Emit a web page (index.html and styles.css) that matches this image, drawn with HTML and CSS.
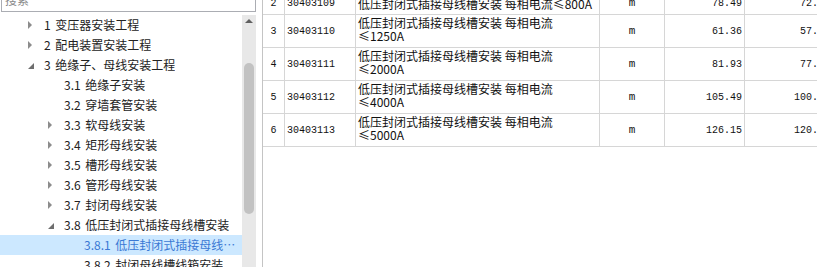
FILE: index.html
```html
<!DOCTYPE html>
<html lang="zh-CN">
<head>
<meta charset="utf-8">
<title>定额库</title>
<link rel="stylesheet" href="styles.css">
</head>
<body>
<div class="app">
  <aside class="left">
    <div class="search"><span class="placeholder">搜索</span></div>
    <div class="tree-area">
      <ul class="tree">
        <li class="node l0"><span class="arrow closed"></span><span class="label">1 变压器安装工程</span></li>
        <li class="node l0"><span class="arrow closed"></span><span class="label">2 配电装置安装工程</span></li>
        <li class="node l0"><span class="arrow open"></span><span class="label">3 绝缘子、母线安装工程</span></li>
        <li class="node l1"><span class="arrow"></span><span class="label">3.1 绝缘子安装</span></li>
        <li class="node l1"><span class="arrow"></span><span class="label">3.2 穿墙套管安装</span></li>
        <li class="node l1"><span class="arrow closed"></span><span class="label">3.3 软母线安装</span></li>
        <li class="node l1"><span class="arrow closed"></span><span class="label">3.4 矩形母线安装</span></li>
        <li class="node l1"><span class="arrow closed"></span><span class="label">3.5 槽形母线安装</span></li>
        <li class="node l1"><span class="arrow closed"></span><span class="label">3.6 管形母线安装</span></li>
        <li class="node l1"><span class="arrow closed"></span><span class="label">3.7 封闭母线安装</span></li>
        <li class="node l1"><span class="arrow open"></span><span class="label">3.8 低压封闭式插接母线槽安装</span></li>
        <li class="node l2 selected"><span class="arrow"></span><span class="label">3.8.1 低压封闭式插接母线槽安装</span></li>
        <li class="node l2"><span class="arrow"></span><span class="label">3.8.2 封闭母线槽线箱安装</span></li>
      </ul>
      <div class="scrollbar">
        <span class="up"></span>
        <span class="thumb"></span>
      </div>
    </div>
  </aside>
  <main class="right">
    <div class="grid">
      <div class="row single">
        <div class="c no">2</div>
        <div class="c code">30403109</div>
        <div class="c name">低压封闭式插接母线槽安装 每相电流≤800A</div>
        <div class="c unit">m</div>
        <div class="c num">78.49</div>
        <div class="c num">72.85</div>
      </div>
      <div class="row">
        <div class="c no">3</div>
        <div class="c code">30403110</div>
        <div class="c name top"><span class="ln">低压封闭式插接母线槽安装 每相电流</span><span class="ln">≤1250A</span></div>
        <div class="c unit">m</div>
        <div class="c num">61.36</div>
        <div class="c num">57.12</div>
      </div>
      <div class="row">
        <div class="c no">4</div>
        <div class="c code">30403111</div>
        <div class="c name top"><span class="ln">低压封闭式插接母线槽安装 每相电流</span><span class="ln">≤2000A</span></div>
        <div class="c unit">m</div>
        <div class="c num">81.93</div>
        <div class="c num">77.43</div>
      </div>
      <div class="row">
        <div class="c no">5</div>
        <div class="c code">30403112</div>
        <div class="c name top"><span class="ln">低压封闭式插接母线槽安装 每相电流</span><span class="ln">≤4000A</span></div>
        <div class="c unit">m</div>
        <div class="c num">105.49</div>
        <div class="c num">100.24</div>
      </div>
      <div class="row">
        <div class="c no">6</div>
        <div class="c code">30403113</div>
        <div class="c name top"><span class="ln">低压封闭式插接母线槽安装 每相电流</span><span class="ln">≤5000A</span></div>
        <div class="c unit">m</div>
        <div class="c num">126.15</div>
        <div class="c num">120.61</div>
      </div>
    </div>
  </main>
</div>
</body>
</html>
```
FILE: styles.css
```css
* { box-sizing: border-box; }
html, body {
  margin: 0;
  padding: 0;
  background: #fff;
  width: 817px;
  height: 267px;
  overflow: hidden;
}
body {
  font-family: "Noto Sans CJK SC", "Noto Sans", sans-serif;
  font-size: 12px;
  color: #222;
}
.app {
  display: flex;
  width: 817px;
  height: 267px;
  overflow: hidden;
}

/* left panel */
.left {
  width: 256px;
  flex: none;
  display: flex;
  flex-direction: column;
}
.search {
  margin-top: -12px;
  margin-left: 1px;
  height: 24px;
  border: 1px solid #abadb3;
  display: flex;
  align-items: center;
  padding-left: 3px;
  flex: none;
}
.placeholder {
  color: #8a8a8a;
  line-height: 14px;
}
.tree-area {
  flex: 1;
  display: flex;
  margin-top: 3px;
  min-height: 0;
}
.tree {
  list-style: none;
  margin: 0;
  padding: 0;
  width: 242px;
  flex: none;
}
.node {
  height: 20px;
  display: flex;
  align-items: center;
  padding-right: 4px;
  white-space: nowrap;
  word-spacing: 2px;
}
.node.l0 { padding-left: 28px; }
.node.l1 { padding-left: 48px; }
.node.l2 { padding-left: 68px; }
.node.selected {
  background: #cce8ff;
  color: #3a78d4;
}
.arrow {
  width: 16px;
  height: 20px;
  flex: none;
  position: relative;
}
.arrow.closed::before {
  content: "";
  position: absolute;
  left: 0;
  top: 6px;
  border-left: 4px solid #8c8c8c;
  border-top: 4px solid transparent;
  border-bottom: 4px solid transparent;
}
.arrow.open::before {
  content: "";
  position: absolute;
  left: 0;
  top: 8px;
  border-right: 6px solid #6e6e6e;
  border-top: 6px solid transparent;
}
.label {
  overflow: hidden;
  text-overflow: ellipsis;
  line-height: 16px;
  min-width: 0;
}
.scrollbar {
  width: 14px;
  flex: none;
  background: #e8e8e8;
  display: flex;
  flex-direction: column;
  align-items: center;
}
.up {
  margin-top: 4px;
  width: 0;
  height: 0;
  border-left: 4px solid transparent;
  border-right: 4px solid transparent;
  border-bottom: 4px solid #606060;
}
.thumb {
  margin-top: 40px;
  width: 10px;
  height: 151px;
  border-radius: 5px;
  background: #c2c2c2;
}

/* right panel */
.right {
  flex: 1;
  margin-left: 6px;
  border-left: 1px solid #c4c4c4;
  overflow: hidden;
  min-width: 0;
}
.grid {
  margin-top: -8px;
  width: 570px;
}
.row {
  display: grid;
  grid-template-columns: 22px 71px 244px 65px 80px 88px;
  height: 33px;
  border-bottom: 1px solid #d6d6d6;
}
.row.single { height: 23px; }
.c {
  border-right: 1px solid #d6d6d6;
  display: flex;
  align-items: center;
  white-space: nowrap;
  overflow: hidden;
  color: #111;
}
.no {
  justify-content: center;
  font-family: "Liberation Mono", monospace;
  font-size: 10px;
}
.code {
  padding-left: 2px;
  font-family: "Liberation Mono", monospace;
  font-size: 10px;
}
.name {
  padding-left: 2px;
  line-height: 13px;
}
.name.top {
  flex-direction: column;
  align-items: flex-start;
  justify-content: flex-start;
  padding-top: 1px;
}
.ln {
  display: block;
  height: 13px;
  line-height: 13px;
}
.unit {
  justify-content: center;
  font-family: "Liberation Mono", monospace;
  font-size: 11px;
}
.num {
  justify-content: flex-end;
  padding-right: 2px;
  font-family: "Liberation Mono", monospace;
  font-size: 10px;
}
```
